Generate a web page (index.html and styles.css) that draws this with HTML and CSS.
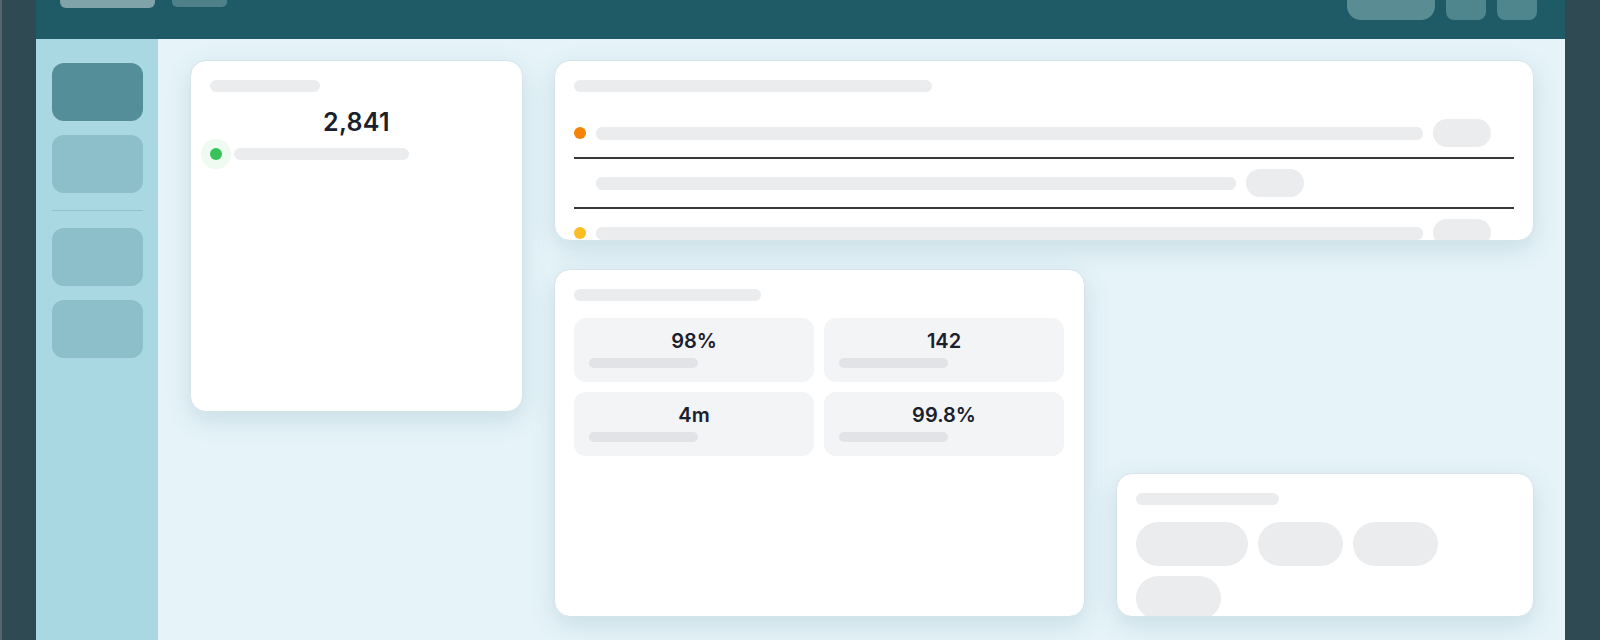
FILE: index.html
```html
<!DOCTYPE html>
<html lang="en">
<head>
    <meta charset="UTF-8">
    <title>Overview</title>
    <link rel="stylesheet" href="styles.css">
</head>
<body>
    <div class="frame">
        <div class="app">
            <div class="topbar">
                <div class="topbar-left">
                    <div class="brand"></div>
                    <div class="nav-item"></div>
                </div>
                <div class="topbar-right">
                    <div class="search"></div>
                    <div class="icon-btn"></div>
                    <div class="icon-btn"></div>
                </div>
            </div>
            <div class="layout">
                <div class="sidebar">
                    <div class="side-item active"></div>
                    <div class="side-item"></div>
                    <div class="side-divider"></div>
                    <div class="side-item"></div>
                    <div class="side-item"></div>
                </div>
                <div class="main">
                    <div class="card card-total">
                        <div class="bar title" style="width: 110px"></div>
                        <div class="big-value">2,841</div>
                        <div class="status">
                            <span class="dot green halo"></span>
                            <div class="bar" style="width: 175px"></div>
                        </div>
                    </div>

                    <div class="card card-activity">
                        <div class="bar title" style="width: 358px"></div>
                        <div class="list">
                            <div class="list-row">
                                <span class="dot orange"></span>
                                <div class="bar line" style="width: 827px"></div>
                                <div class="pill"></div>
                            </div>
                            <div class="list-row">
                                <span class="dot"></span>
                                <div class="bar line" style="width: 640px"></div>
                                <div class="pill"></div>
                            </div>
                            <div class="list-row">
                                <span class="dot yellow"></span>
                                <div class="bar line" style="width: 827px"></div>
                                <div class="pill"></div>
                            </div>
                        </div>
                    </div>

                    <div class="card card-stats">
                        <div class="bar title" style="width: 187px"></div>
                        <div class="tiles">
                            <div class="tile">
                                <div class="tile-value">98%</div>
                                <div class="tile-bar"></div>
                            </div>
                            <div class="tile">
                                <div class="tile-value">142</div>
                                <div class="tile-bar"></div>
                            </div>
                            <div class="tile">
                                <div class="tile-value">4m</div>
                                <div class="tile-bar"></div>
                            </div>
                            <div class="tile">
                                <div class="tile-value">99.8%</div>
                                <div class="tile-bar"></div>
                            </div>
                        </div>
                    </div>

                    <div class="card card-tags">
                        <div class="bar title" style="width: 143px"></div>
                        <div class="chips">
                            <div class="chip" style="width: 112px"></div>
                            <div class="chip"></div>
                            <div class="chip"></div>
                            <div class="chip"></div>
                        </div>
                    </div>
                </div>
            </div>
        </div>
    </div>
</body>
</html>
```

FILE: styles.css
```css
body{
    margin: 0;
    height: 640px;
    overflow: hidden;
    font-family: 'Inter', 'Liberation Sans', sans-serif;
    color: #1a202c;
    background: #2f4a53;
}
.frame{
    display: flex;
    height: 640px;
    border-left: 2px solid #56666c;
    padding: 0 35px 0 34px;
}
.app{
    flex: 1;
    display: flex;
    flex-direction: column;
}

/* top bar, partly scrolled out of view */
.topbar{
    height: 80px;
    margin-top: -41px;
    flex-shrink: 0;
    background: #1f5b66;
    display: flex;
    align-items: center;
    justify-content: space-between;
    padding: 0 28px 0 24px;
}
.topbar-left, .topbar-right{
    display: flex;
    align-items: center;
}
.topbar-left{
    gap: 17px;
}
.topbar-right{
    gap: 11px;
}
.brand{
    width: 95px;
    height: 18px;
    border-radius: 6px;
    background: #7fa3a9;
}
.nav-item{
    width: 55px;
    height: 16px;
    border-radius: 5px;
    background: #4e8189;
}
.search{
    width: 88px;
    height: 42px;
    border-radius: 14px;
    background: #5a8c94;
}
.icon-btn{
    width: 40px;
    height: 42px;
    border-radius: 8px;
    background: #4f868e;
}

.layout{
    flex: 1;
    display: flex;
    min-height: 0;
}
.sidebar{
    width: 122px;
    flex-shrink: 0;
    box-sizing: border-box;
    background: #a9d8e2;
    padding: 24px 15px 0 16px;
    display: flex;
    flex-direction: column;
    gap: 14px;
}
.side-item{
    height: 58px;
    border-radius: 12px;
    background: #8dbfca;
}
.side-item.active{
    background: #548e98;
}
.side-divider{
    height: 1px;
    margin: 3px 0;
    background: #8cc4ce;
}

.main{
    flex: 1;
    background: #e6f4f9;
    padding: 21px 31px 0 32px;
    display: grid;
    grid-template-columns: 333px 531px 1fr;
    grid-template-rows: 181px 176px 144px;
    column-gap: 31px;
    row-gap: 28px;
    align-content: start;
}
.card{
    background: #fff;
    border: 1px solid #d6e4e8;
    border-radius: 16px;
    padding: 19px;
    box-shadow: 0 8px 26px rgba(40, 100, 120, 0.16);
    overflow: hidden;
    min-width: 0;
}
.card-total{
    grid-column: 1;
    grid-row: 1 / span 2;
    align-self: start;
    height: 352px;
    box-sizing: border-box;
}
.card-activity{
    grid-column: 2 / span 2;
    grid-row: 1;
}
.card-stats{
    grid-column: 2;
    grid-row: 2 / span 2;
}
.card-tags{
    grid-column: 3;
    grid-row: 3;
}

/* placeholder bars */
.bar{
    height: 12px;
    border-radius: 6px;
    background: #ebecee;
    flex-shrink: 0;
}
.bar.line{
    height: 13px;
}

.big-value{
    margin-top: 15px;
    text-align: center;
    font-size: 25px;
    line-height: 30px;
    font-weight: 600;
    letter-spacing: 0.3px;
}
.status{
    display: flex;
    align-items: center;
    gap: 12px;
    margin-top: 11px;
}

.dot{
    width: 12px;
    height: 12px;
    border-radius: 50%;
    flex-shrink: 0;
}
.dot.green{
    background: #37c35a;
}
.dot.halo{
    box-shadow: 0 0 0 9px #effaf1;
}
.dot.orange{
    background: #f68207;
}
.dot.yellow{
    background: #fbbd23;
}

.list{
    margin-top: 17px;
}
.list-row{
    display: flex;
    align-items: center;
    gap: 10px;
    padding: 10px 0;
    border-bottom: 2px solid #383838;
}
.list-row:last-child{
    border-bottom: 0;
}
.pill{
    width: 58px;
    height: 28px;
    border-radius: 14px;
    background: #ebecee;
    flex-shrink: 0;
}

.tiles{
    margin-top: 17px;
    display: grid;
    grid-template-columns: 240px 240px;
    gap: 10px;
}
.tile{
    height: 64px;
    box-sizing: border-box;
    border-radius: 12px;
    background: #f3f4f6;
    padding: 11px 15px 0;
}
.tile-value{
    text-align: center;
    font-size: 20px;
    line-height: 24px;
    font-weight: 600;
}
.tile-bar{
    width: 109px;
    height: 10px;
    margin-top: 5px;
    border-radius: 5px;
    background: #e2e3e6;
}

.chips{
    margin-top: 17px;
    display: flex;
    flex-wrap: wrap;
    gap: 10px;
}
.chip{
    width: 85px;
    height: 44px;
    border-radius: 22px;
    background: #ebecee;
}
```
